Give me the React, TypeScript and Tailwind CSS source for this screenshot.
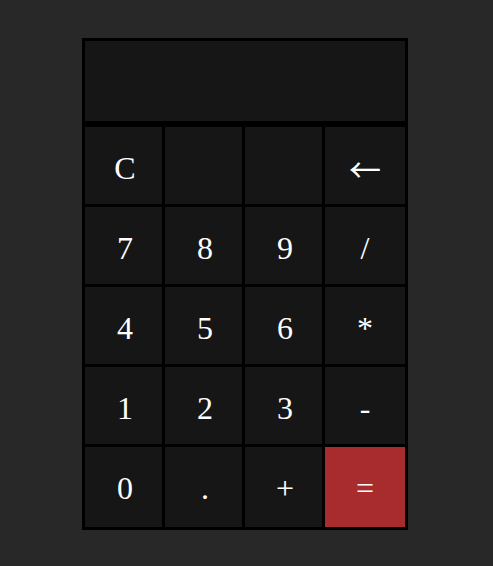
import React from "react";

const keys: { label: string; red?: boolean; arrow?: boolean }[] = [
  { label: "C" },
  { label: "" },
  { label: "" },
  { label: "←", arrow: true },
  { label: "7" },
  { label: "8" },
  { label: "9" },
  { label: "/" },
  { label: "4" },
  { label: "5" },
  { label: "6" },
  { label: "*" },
  { label: "1" },
  { label: "2" },
  { label: "3" },
  { label: "-" },
  { label: "0" },
  { label: "." },
  { label: "+" },
  { label: "=", red: true },
];

export default function App() {
  return (
    <div className="min-h-[566px] w-full bg-[#282828] pl-[82px] pt-[38px]">
      <div className="w-[326px] border-[3px] border-black bg-black">
        <div className="mb-[6px] h-[80px] bg-[#161616]" />
        <div className="grid grid-cols-[77px_77px_77px_80px] grid-rows-[77px_77px_77px_77px_80px] gap-[3px]">
          {keys.map((k, i) => {
            const lastCol = i % 4 === 3;
            const lastRow = i >= 16;
            return (
              <button
                key={i}
                className={`flex items-center justify-center text-[32px] leading-none text-white ${
                  lastCol ? "pl-0" : "pl-[3px]"
                } ${lastRow ? "pt-[1px]" : "pt-[5px]"} ${
                  k.red ? "bg-[#a82c2d]" : "bg-[#161616]"
                }`}
                style={{
                  fontFamily: k.arrow
                    ? '"Noto Sans CJK SC", sans-serif'
                    : '"Liberation Serif", "DejaVu Serif", serif',
                }}
              >
                {k.label}
              </button>
            );
          })}
        </div>
      </div>
    </div>
  );
}
